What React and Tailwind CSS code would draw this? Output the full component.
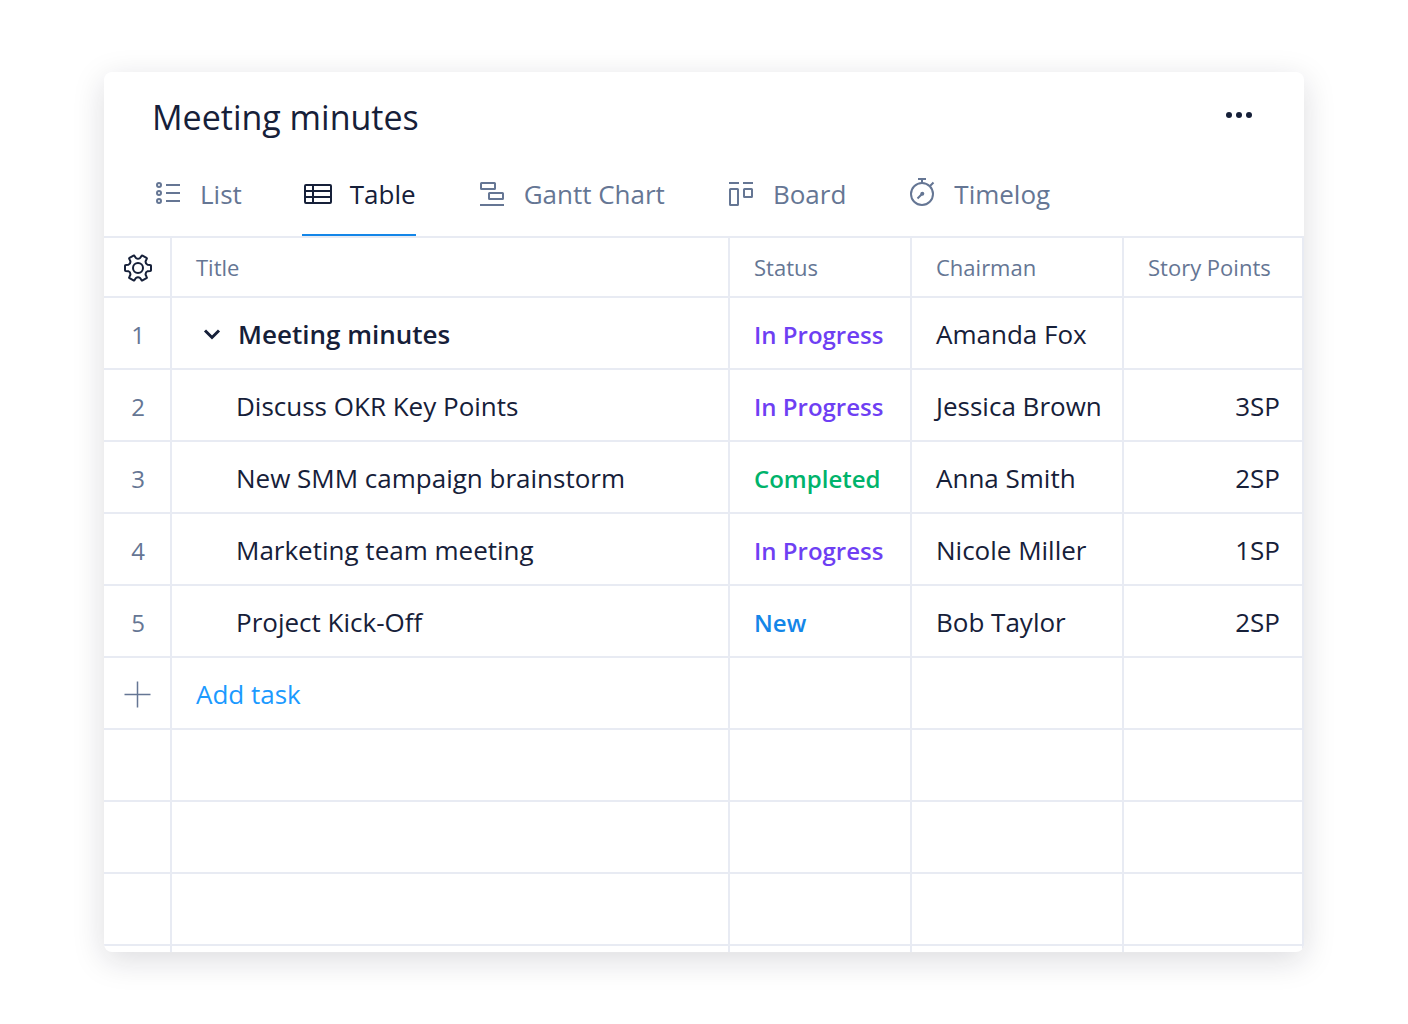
import React from "react";

function Icon({ children, className = "size-8" }) {
  return (
    <svg
      viewBox="0 0 32 32"
      className={className}
      fill="none"
      stroke="currentColor"
      strokeWidth="2"
      aria-hidden="true"
    >
      {children}
    </svg>
  );
}

const ListIcon = () => (
  <Icon>
    <circle cx="7" cy="7" r="2" />
    <circle cx="7" cy="15" r="2" />
    <circle cx="7" cy="23" r="2" />
    <path d="M14 7h14M14 15h14M14 23h14" />
  </Icon>
);

const TableIcon = () => (
  <Icon>
    <rect x="3" y="7" width="26" height="18" rx="1" />
    <path d="M11 7v18M3 13h26M3 19h26" />
  </Icon>
);

const GanttIcon = () => (
  <Icon>
    <rect x="5" y="5" width="14" height="6" rx="0.5" />
    <rect x="13" y="15" width="14" height="6" rx="0.5" />
    <path d="M4 27h24" />
  </Icon>
);

const BoardIcon = () => (
  <Icon>
    <path d="M4 5h10M18 5h10" />
    <rect x="5" y="11" width="8" height="16" rx="0.5" />
    <rect x="19" y="11" width="8" height="8" rx="0.5" />
  </Icon>
);

const TimelogIcon = () => (
  <Icon>
    <circle cx="16" cy="16" r="11" />
    <path d="M12 1h8M16 1v4M24 8l3.5-3.5M11.5 20.5L16 16" />
    <circle cx="16.3" cy="15.7" r="2" fill="currentColor" stroke="none" />
  </Icon>
);

// Six-toothed gear outline: each tooth is the same profile turned by 60 degrees.
function gearPath() {
  const at = (x, y, turn) => {
    const a = (turn * Math.PI) / 180;
    const px = 16 + x * Math.cos(a) - y * Math.sin(a);
    const py = 16 + x * Math.sin(a) + y * Math.cos(a);
    return `${px.toFixed(2)} ${py.toFixed(2)}`;
  };
  const teeth = [0, 60, 120, 180, 240, 300].map(
    (t) =>
      `L${at(9.7, -3.2, t)} L${at(12.3, -3, t)} Q${at(13, -3, t)} ${at(13, -2.3, t)} ` +
      `L${at(13, 2.3, t)} Q${at(13, 3, t)} ${at(12.3, 3, t)} L${at(9.7, 3.2, t)} ` +
      `Q${at(8.4, 0, t + 30)} ${at(9.7, -3.2, t + 60)}`
  );
  return `M${at(9.7, -3.2, 0)} ${teeth.join(" ")} Z`;
}

const GearIcon = () => (
  <Icon>
    <circle cx="16" cy="16" r="5" />
    <path strokeLinejoin="round" d={gearPath()} />
  </Icon>
);

const tabs = [
  { label: "List", icon: ListIcon },
  { label: "Table", icon: TableIcon, active: true },
  { label: "Gantt Chart", icon: GanttIcon },
  { label: "Board", icon: BoardIcon },
  { label: "Timelog", icon: TimelogIcon },
];

const statusColors = {
  "In Progress": "text-[#6e3ff3]",
  Completed: "text-[#00b36b]",
  New: "text-[#1486e8]",
};

const tasks = [
  { title: "Meeting minutes", status: "In Progress", chairman: "Amanda Fox", points: "", parent: true },
  { title: "Discuss OKR Key Points", status: "In Progress", chairman: "Jessica Brown", points: "3SP" },
  { title: "New SMM campaign brainstorm", status: "Completed", chairman: "Anna Smith", points: "2SP" },
  { title: "Marketing team meeting", status: "In Progress", chairman: "Nicole Miller", points: "1SP" },
  { title: "Project Kick-Off", status: "New", chairman: "Bob Taylor", points: "2SP" },
];

const line = "border-r-2 border-b-2 border-[#e8ebf3]";

function Cell({ className = "", children }) {
  return <td className={`${line} ${className}`}>{children}</td>;
}

function EmptyCells({ count }) {
  return Array.from({ length: count }, (_, i) => <Cell key={i} />);
}

export default function App() {
  return (
    <main className="min-h-screen bg-white px-26 py-18 font-['Open_Sans',sans-serif] text-[#162039]">
      <section className="overflow-hidden rounded-lg bg-white shadow-[0_8px_32px_rgba(20,20,43,0.15)]">
        <header className="flex items-center justify-between px-12 pt-5">
          <h1 className="text-[34px] leading-[50px]">Meeting minutes</h1>
          <button type="button" aria-label="More options" className="-mt-1">
            <svg viewBox="0 0 32 16" className="h-4 w-8" fill="currentColor" aria-hidden="true">
              <circle cx="5" cy="8" r="3" />
              <circle cx="15" cy="8" r="3" />
              <circle cx="25" cy="8" r="3" />
            </svg>
          </button>
        </header>

        <nav className="mt-[22px] flex gap-15 px-12" aria-label="Views">
          {tabs.map(({ label, icon: TabIcon, active }) => (
            <a
              key={label}
              href="#"
              aria-current={active ? "page" : undefined}
              className={`flex items-center gap-4 border-b-2 pt-3 pb-[22px] text-[26px] leading-9 whitespace-nowrap ${
                active ? "border-[#1486e8]" : "border-transparent text-[#657694]"
              }`}
            >
              <TabIcon />
              {label}
            </a>
          ))}
        </nav>

        <div className="h-[716px] overflow-hidden">
          <table className="w-full table-fixed border-separate border-spacing-0 border-t-2 border-[#e8ebf3] text-left text-[26px] leading-9">
            <colgroup>
              <col className="w-17" />
              <col />
              <col className="w-[182px]" />
              <col className="w-[212px]" />
              <col className="w-[180px]" />
            </colgroup>
            <thead>
              <tr className="h-15 text-[22px] text-[#657694]">
                <th className={`${line} pt-0.5 pl-0.5`}>
                  <button type="button" aria-label="Table settings" className="mx-auto block text-[#162039]">
                    <GearIcon />
                  </button>
                </th>
                <th className={`${line} px-6 font-normal`}>Title</th>
                <th className={`${line} px-6 font-normal`}>Status</th>
                <th className={`${line} px-6 font-normal`}>Chairman</th>
                <th className={`${line} px-6 font-normal whitespace-nowrap`}>Story Points</th>
              </tr>
            </thead>
            <tbody>
              {tasks.map((task, index) => (
                <tr key={task.title} className="h-18">
                  <Cell className="pt-1 pl-0.5 text-center text-2xl text-[#657694]">{index + 1}</Cell>
                  <Cell className="pt-0.5">
                    {task.parent ? (
                      <div className="flex items-center gap-3.5 pl-7 font-semibold">
                        <button type="button" aria-label="Collapse">
                          <svg viewBox="0 0 24 24" className="size-6" fill="none" stroke="currentColor" strokeWidth="3" aria-hidden="true">
                            <path d="M5 8.5l7 7 7-7" />
                          </svg>
                        </button>
                        {task.title}
                      </div>
                    ) : (
                      <div className="pl-16">{task.title}</div>
                    )}
                  </Cell>
                  <Cell className={`pt-1 pl-6 text-2xl font-semibold ${statusColors[task.status]}`}>{task.status}</Cell>
                  <Cell className="pt-0.5 pl-6 whitespace-nowrap">{task.chairman}</Cell>
                  <Cell className="pt-0.5 pr-[22px] text-right">{task.points}</Cell>
                </tr>
              ))}
              <tr className="h-18">
                <Cell className="pt-0.5">
                  <svg viewBox="0 0 32 32" className="mx-auto size-8 text-[#657694]" fill="none" stroke="currentColor" strokeWidth="1.5" aria-hidden="true">
                    <path d="M3.5 16.5h26M16.5 3.5v26" />
                  </svg>
                </Cell>
                <Cell className="pt-0.5 pl-6">
                  <button type="button" className="text-[#1b9aff]">Add task</button>
                </Cell>
                <EmptyCells count={3} />
              </tr>
              {[0, 1, 2, 3].map((row) => (
                <tr key={row} className="h-18">
                  <EmptyCells count={5} />
                </tr>
              ))}
            </tbody>
          </table>
        </div>
      </section>
    </main>
  );
}
